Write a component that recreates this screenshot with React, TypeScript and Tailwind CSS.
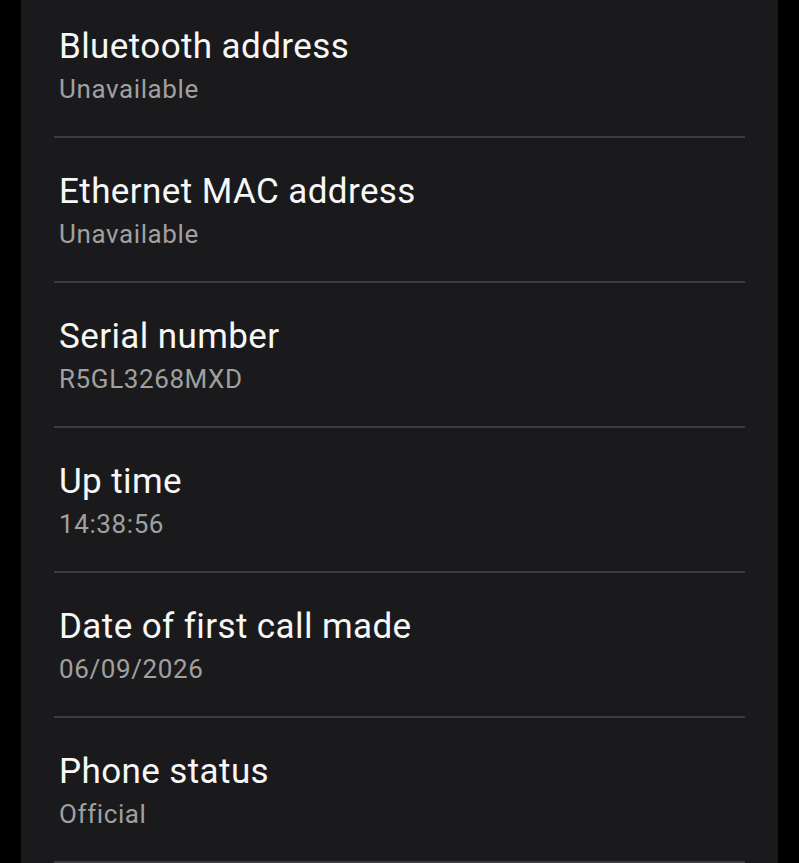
const rows = [
  { title: "Bluetooth address", value: "Unavailable" },
  { title: "Ethernet MAC address", value: "Unavailable" },
  { title: "Serial number", value: "R5GL3268MXD" },
  { title: "Up time", value: "14:38:56" },
  { title: "Date of first call made", value: "06/09/2026" },
  { title: "Phone status", value: "Official" },
];

export default function App() {
  return (
    <div className="h-[863px] overflow-hidden bg-black" style={{ fontFamily: "Roboto, 'Noto Sans', sans-serif" }}>
      <div className="mx-[21px] h-full overflow-hidden bg-[#1a1a1c]">
        <div className="mt-[-7px]">
          {rows.map((r) => (
            <div key={r.title}>
              <div className="h-[143px] px-[38px] pt-[33px]">
                <div className="text-[35px] leading-[42px] tracking-[0.4px] text-[#f7f7f7]">{r.title}</div>
                <div className="mt-[5px] text-[26px] leading-[32px] tracking-[0.6px] text-[#a0a0a0]">{r.value}</div>
              </div>
              <div className="mx-[33px] h-[2px] bg-[#3c3c3e]" />
            </div>
          ))}
        </div>
      </div>
    </div>
  );
}
